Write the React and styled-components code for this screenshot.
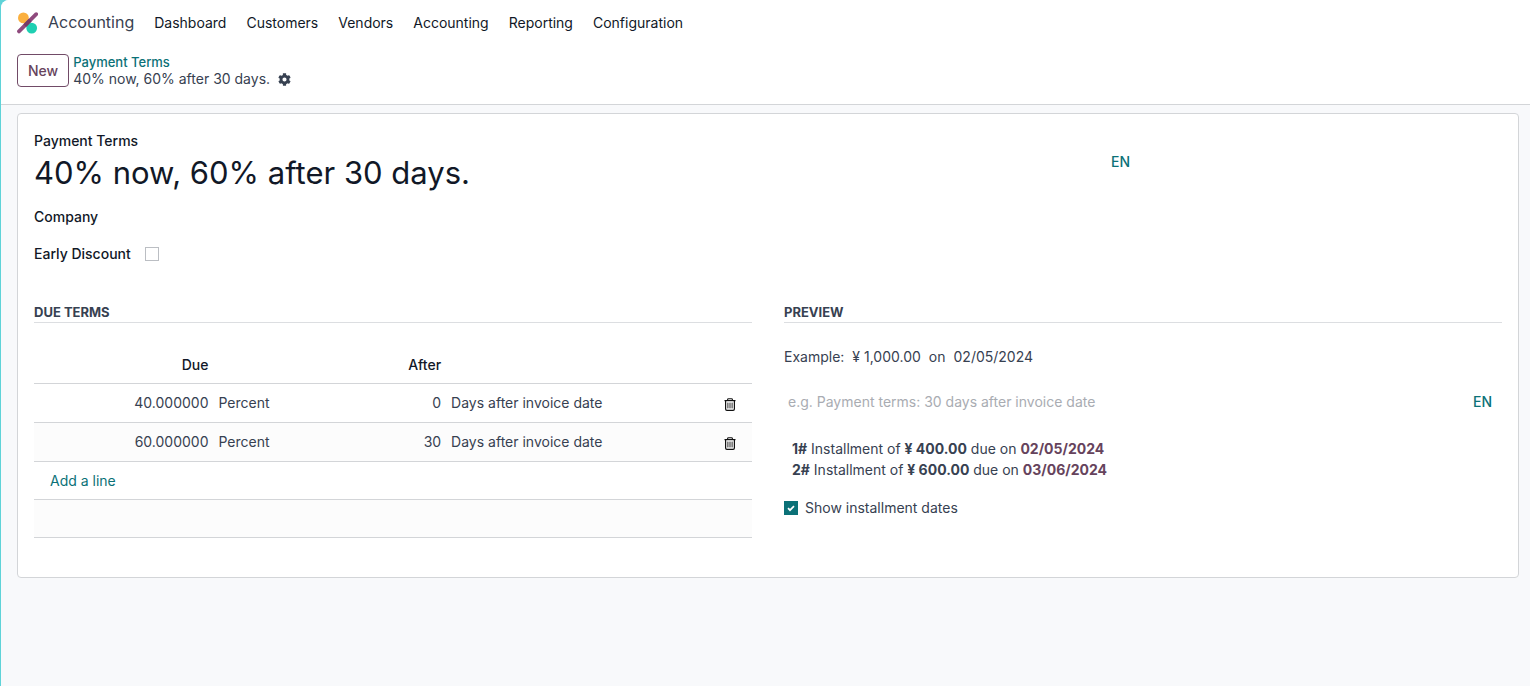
import React, { useState } from "react";
import styled, { createGlobalStyle } from "styled-components";
import { FaCog } from "react-icons/fa";

const GlobalStyle = createGlobalStyle`
  * {
    box-sizing: border-box;
  }
  body {
    margin: 0;
    background: #5fd3d8;
    color: #374151;
    font-family: Inter, "Liberation Sans", sans-serif;
    font-size: 14px;
    line-height: 21px;
  }
  input,
  button {
    font: inherit;
    color: inherit;
  }
  a {
    text-decoration: none;
  }
`;

const Page = styled.div`
  min-height: 100vh;
  margin-left: 1px;
  border-top-left-radius: 8px;
  background: #f8f9fb;
  overflow: hidden;
`;

const TopArea = styled.header`
  background: #fff;
  border-bottom: 1px solid #d3d5d8;
`;

const NavBar = styled.nav`
  display: flex;
  align-items: center;
  height: 45px;
  padding: 0 16px;
`;

const Brand = styled.a`
  display: flex;
  align-items: center;
  gap: 10px;
  margin-right: 20px;
  color: #374151;
  font-size: 16px;
  svg {
    width: 21px;
    height: 22px;
  }
`;

const Menu = styled.div`
  display: flex;
  gap: 20px;
`;

const MenuLink = styled.a`
  color: #111827;
`;

const ControlPanel = styled.div`
  display: flex;
  align-items: center;
  gap: 4px;
  padding: 8px 16px 17px;
`;

const NewButton = styled.button`
  height: 33px;
  padding: 0 10px;
  border: 1px solid #714b67;
  border-radius: 4px;
  background: #fff;
  color: #66435c;
  font-weight: 500;
`;

const Breadcrumb = styled.div`
  line-height: 17px;
  a {
    color: #0b7177;
    font-size: 13px;
    font-weight: 500;
  }
`;

const Current = styled.div`
  display: flex;
  align-items: center;
  gap: 8px;
  line-height: 16px;
`;

const IconButton = styled.button`
  display: inline-flex;
  padding: 0;
  border: 0;
  background: none;
  vertical-align: middle;
`;

const Sheet = styled.main`
  margin: 8px 11px 16px 16px;
  padding: 16px 16px 39px;
  border: 1px solid #d3d5d8;
  border-radius: 4px;
  background: #fff;
`;

const Label = styled.label`
  color: #111827;
  font-weight: 500;
`;

const TitleBlock = styled.div`
  display: flex;
  flex-direction: column;
  width: 75%;
`;

const TitleRow = styled.div`
  display: flex;
  align-items: flex-start;
  height: 42px;
`;

const TitleInput = styled.input`
  flex: 1;
  min-width: 0;
  height: 42px;
  padding: 0;
  border: 0;
  background: transparent;
  color: #111827;
  font-size: 31px;
  outline: none;
`;

const LangButton = styled.button`
  padding: 0 ${(props) => props.$pad}px 0 0;
  border: 0;
  background: none;
  color: #0b7177;
  font-weight: 500;
`;

const Field = styled.div`
  display: flex;
  align-items: center;
  gap: 14px;
  height: 37px;
`;

const Fields = styled.div`
  padding: 5px 0 30px;
`;

const Check = styled.input.attrs({ type: "checkbox" })`
  appearance: none;
  flex: none;
  width: 14px;
  height: 14px;
  margin: 0;
  border: 1px solid #bbbec3;
  background: #fff;
  &:checked {
    border-color: #0b7177;
    background: #0b7177
      url("data:image/svg+xml,%3Csvg xmlns='http://www.w3.org/2000/svg' viewBox='0 0 12 12'%3E%3Cpath d='M3 6.2l2 2 4-4' fill='none' stroke='white' stroke-width='1.7'/%3E%3C/svg%3E");
  }
`;

const Columns = styled.div`
  display: grid;
  grid-template-columns: 1fr 1fr;
  gap: 32px;
`;

const SectionTitle = styled.h2`
  margin: 0;
  border-bottom: 1px solid #dcdee1;
  font-size: 13px;
  font-weight: 700;
  line-height: 20px;
  text-transform: uppercase;
`;

const Table = styled.table`
  width: 100%;
  margin-top: 23px;
  border-collapse: collapse;
  table-layout: fixed;
  th,
  td {
    padding: 0 5px;
    text-align: left;
    border-bottom: 1px solid #d3d5d8;
  }
  th {
    height: 37px;
    color: #111827;
    font-weight: 500;
  }
  tbody tr:nth-child(even) {
    background: #fcfcfc;
  }
`;

const Col = styled.col`
  width: ${(props) => props.$width};
`;

const Row = styled.tr`
  height: ${(props) => props.$height}px;
`;

const Cell = styled.td`
  && {
    text-align: ${(props) => props.$align || "left"};
    padding-right: ${(props) => (props.$end ? 16 : 5)}px;
    padding-left: ${(props) => (props.$indent ? 16 : 5)}px;
  }
`;

const AddLine = styled.a`
  color: #0b7177;
`;

const Example = styled.div`
  display: flex;
  gap: 8px;
  margin-top: 24px;
  line-height: 20px;
`;

const NoteRow = styled.div`
  display: flex;
  margin-top: 24px;
`;

const NoteInput = styled.input`
  flex: 1;
  min-width: 0;
  height: 20px;
  padding: 0 4px;
  border: 0;
  outline: none;
  &::placeholder {
    color: #a9acb2;
    opacity: 1;
  }
`;

const Installments = styled.div`
  padding: 26px 8px 17px;
  b {
    font-weight: 700;
  }
`;

const DueDate = styled.b`
  color: #66435c;
`;

const CheckLabel = styled.label`
  display: flex;
  align-items: center;
  gap: 7px;
`;

const menu = [
  "Dashboard",
  "Customers",
  "Vendors",
  "Accounting",
  "Reporting",
  "Configuration",
];

const terms = [
  { due: "40.000000", unit: "Percent", after: "0", delay: "Days after invoice date" },
  { due: "60.000000", unit: "Percent", after: "30", delay: "Days after invoice date" },
];

const installments = [
  { amount: "¥ 400.00", date: "02/05/2024" },
  { amount: "¥ 600.00", date: "03/06/2024" },
];

const Logo = () => (
  <svg viewBox="0 0 21 22" aria-hidden="true">
    <circle cx="6.4" cy="5.9" r="5.4" fill="#fbb03f" />
    <circle cx="14.7" cy="16.1" r="5.4" fill="#1fcfb2" />
    <path d="M2 19.4L19.2 2.2" stroke="#8f4a7d" strokeWidth="3.8" strokeLinecap="round" />
    <path d="M7.8 13.6L13.2 8.2" stroke="#763a66" strokeWidth="3.8" />
  </svg>
);

const Trash = () => (
  <svg width="12" height="13" viewBox="0 0 12 13" fill="none" stroke="#111" aria-hidden="true">
    <path d="M0.5 2.6H11.5" strokeWidth="1.2" />
    <path d="M3.6 2.4V1.6Q3.6 0.7 4.5 0.7H7.5Q8.4 0.7 8.4 1.6V2.4" strokeWidth="1.1" />
    <path d="M1.6 2.8V11Q1.6 12.3 2.9 12.3H9.1Q10.4 12.3 10.4 11V2.8" strokeWidth="1.2" />
    <path d="M3.9 4.6V10.4M6 4.6V10.4M8.1 4.6V10.4" strokeWidth="0.9" />
  </svg>
);

const App = () => {
  const [name, setName] = useState("40% now, 60% after 30 days.");
  const [discount, setDiscount] = useState(false);
  const [showDates, setShowDates] = useState(true);

  return (
    <>
      <GlobalStyle />
      <Page>
        <TopArea>
          <NavBar>
            <Brand href="#">
              <Logo />
              Accounting
            </Brand>
            <Menu>
              {menu.map((item) => (
                <MenuLink href="#" key={item}>
                  {item}
                </MenuLink>
              ))}
            </Menu>
          </NavBar>
          <ControlPanel>
            <NewButton type="button">New</NewButton>
            <Breadcrumb>
              <a href="#">Payment Terms</a>
              <Current>
                40% now, 60% after 30 days.
                <IconButton type="button" aria-label="Actions">
                  <FaCog size={13} />
                </IconButton>
              </Current>
            </Breadcrumb>
          </ControlPanel>
        </TopArea>

        <Sheet>
          <TitleBlock>
            <Label htmlFor="name">Payment Terms</Label>
            <TitleRow>
              <TitleInput
                id="name"
                value={name}
                onChange={(e) => setName(e.target.value)}
              />
              <LangButton type="button" $pad={5}>
                EN
              </LangButton>
            </TitleRow>
          </TitleBlock>
          <Fields>
            <Field>
              <Label as="span">Company</Label>
            </Field>
            <Field>
              <Label htmlFor="discount">Early Discount</Label>
              <Check
                id="discount"
                checked={discount}
                onChange={(e) => setDiscount(e.target.checked)}
              />
            </Field>
          </Fields>

          <Columns>
            <section>
              <SectionTitle>Due Terms</SectionTitle>
              <Table>
                <colgroup>
                  <Col $width="25%" />
                  <Col $width="23%" />
                  <Col $width="9.4%" />
                  <Col $width="auto" />
                  <Col $width="7%" />
                </colgroup>
                <thead>
                  <tr>
                    <Cell as="th" $align="right">Due</Cell>
                    <th />
                    <Cell as="th" $align="right">After</Cell>
                    <th />
                    <th />
                  </tr>
                </thead>
                <tbody>
                  {terms.map((term) => (
                    <Row key={term.due} $height={39}>
                      <Cell $align="right">{term.due}</Cell>
                      <Cell>{term.unit}</Cell>
                      <Cell $align="right">{term.after}</Cell>
                      <Cell>{term.delay}</Cell>
                      <Cell $align="right" $end>
                        <IconButton type="button" aria-label="Delete row">
                          <Trash />
                        </IconButton>
                      </Cell>
                    </Row>
                  ))}
                  <Row $height={38}>
                    <Cell colSpan={5} $indent>
                      <AddLine href="#">Add a line</AddLine>
                    </Cell>
                  </Row>
                  <Row $height={38}>
                    <Cell colSpan={5} />
                  </Row>
                </tbody>
              </Table>
            </section>

            <section>
              <SectionTitle>Preview</SectionTitle>
              <Example>
                <span>Example:</span>
                <span>¥ 1,000.00</span>
                <span>on</span>
                <span>02/05/2024</span>
              </Example>
              <NoteRow>
                <NoteInput
                  aria-label="Description on the invoice"
                  placeholder="e.g. Payment terms: 30 days after invoice date"
                />
                <LangButton type="button" $pad={10}>
                  EN
                </LangButton>
              </NoteRow>
              <Installments>
                {installments.map((item, i) => (
                  <div key={item.date}>
                    <b>{i + 1}#</b> Installment of <b>{item.amount}</b> due on{" "}
                    <DueDate>{item.date}</DueDate>
                  </div>
                ))}
              </Installments>
              <CheckLabel>
                <Check
                  checked={showDates}
                  onChange={(e) => setShowDates(e.target.checked)}
                />
                Show installment dates
              </CheckLabel>
            </section>
          </Columns>
        </Sheet>
      </Page>
    </>
  );
};

export default App;
